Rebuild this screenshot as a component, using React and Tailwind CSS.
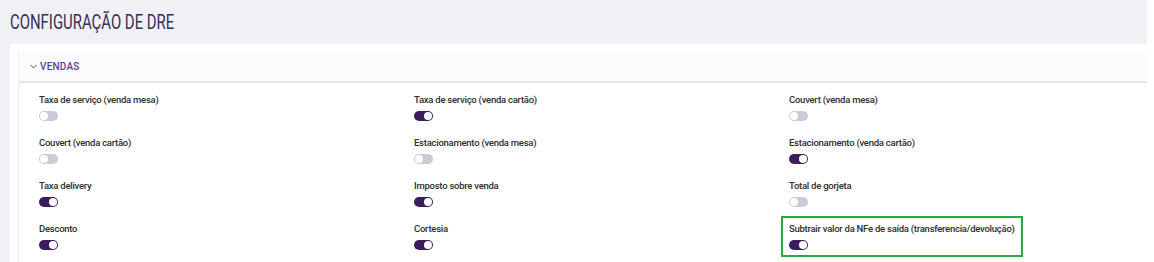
const items = [
  { label: 'Taxa de serviço (venda mesa)', on: false },
  { label: 'Taxa de serviço (venda cartão)', on: true },
  { label: 'Couvert (venda mesa)', on: false },
  { label: 'Couvert (venda cartão)', on: false },
  { label: 'Estacionamento (venda mesa)', on: false },
  { label: 'Estacionamento (venda cartão)', on: true },
  { label: 'Taxa delivery', on: true },
  { label: 'Imposto sobre venda', on: true },
  { label: 'Total de gorjeta', on: false },
  { label: 'Desconto', on: true },
  { label: 'Cortesia', on: true },
  { label: 'Subtrair valor da NFe de saída (transferencia/devolução)', on: true, highlight: true },
];

function Toggle({ on }) {
  return (
    <span
      className={`flex h-[10px] w-[19px] items-center rounded-full px-[1px] ${
        on ? 'justify-end bg-[#3b1d5e]' : 'justify-start bg-[#c9ccd6]'
      }`}
    >
      <span className="h-[8px] w-[8px] rounded-full bg-white" />
    </span>
  );
}

const labelCls = 'text-[9.5px] font-medium leading-[12px] tracking-[-0.25px] text-[#2e2e2e]';

function Field({ label, on, highlight }) {
  if (highlight) {
    return (
      <div className="-mx-[8px] -mt-[7px] flex w-max flex-col gap-[5px] border-2 border-[#2aa845] px-[6px] pt-[5px] pb-[5px]">
        <span className={labelCls}>{label}</span>
        <Toggle on={on} />
      </div>
    );
  }
  return (
    <div className="flex flex-col gap-[5px]">
      <span className={labelCls}>{label}</span>
      <Toggle on={on} />
    </div>
  );
}

export default function App() {
  return (
    <main
      className="flex h-[262px] w-[1154px] overflow-hidden bg-white"
      style={{ fontFamily: 'Roboto, "Liberation Sans", sans-serif' }}
    >
      <div className="flex w-[1147px] flex-col bg-[#f0f1f5]">
        <div className="flex h-[44px] items-center pl-[10px] pt-[1px]">
          <h1 className="origin-left scale-x-[0.71] whitespace-nowrap text-[21px] font-normal leading-none text-[#3a2d58]">
            CONFIGURAÇÃO DE DRE
          </h1>
        </div>

        <section className="ml-[10px] flex-1 bg-white pl-[8px] pt-[8px]">
          <div className="h-full border-l border-[#ececef]">
            <div className="flex h-[31px] items-center gap-[3px] border-b-2 border-[#e6e6e9] bg-[#fbfbfd] pl-[11px]">
              <svg width="7" height="5" viewBox="0 0 7 5" className="text-[#6a4b9a]">
                <path d="M0.5 0.8 L3.5 4 L6.5 0.8" fill="none" stroke="currentColor" strokeWidth="1" />
              </svg>
              <span className="text-[10px] font-medium tracking-[0.2px] text-[#5e3d92]">VENDAS</span>
            </div>

            <div className="grid grid-cols-[375px_375px_375px] gap-y-[16px] pl-[20px] pt-[11px]">
              {items.map((it) => (
                <Field key={it.label} {...it} />
              ))}
            </div>
          </div>
        </section>
      </div>
    </main>
  );
}
